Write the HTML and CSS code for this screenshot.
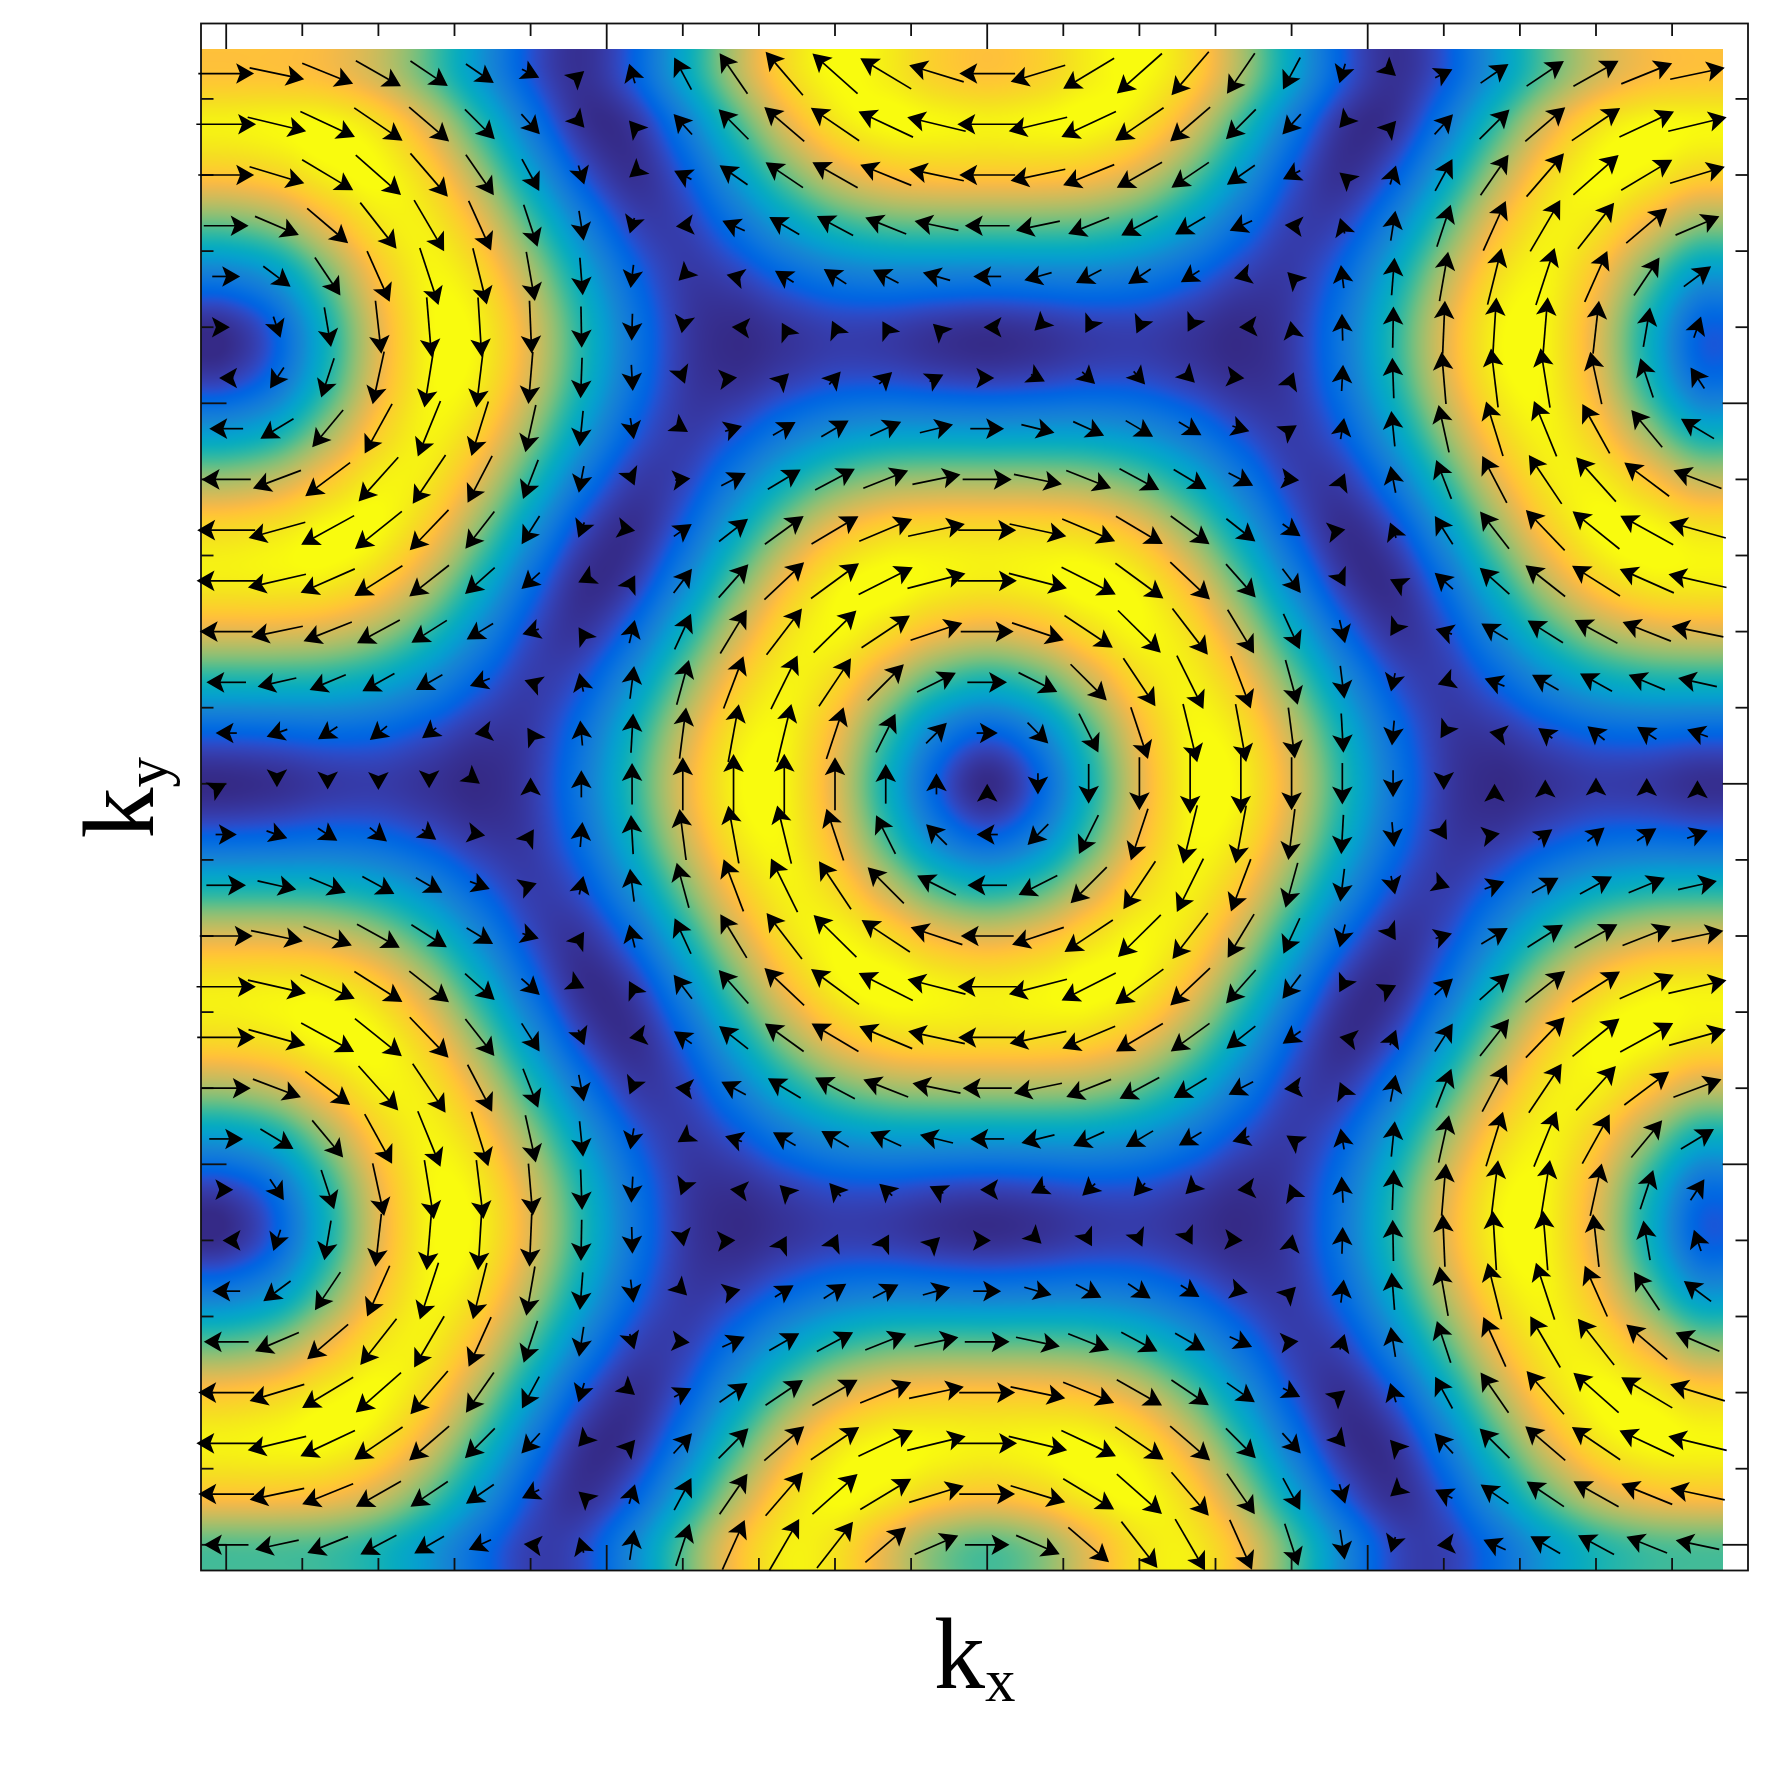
FILE: index.html
```html
<!DOCTYPE html>
<html lang="en">
<head>
<meta charset="utf-8">
<title>Spin texture in the kx-ky plane</title>
<link rel="stylesheet" href="styles.css">
</head>
<body>
<main class="figure">
  <div class="ylabel"><span class="label">k<sub class="sub">y</sub></span></div>
  <canvas id="plot" class="plot" width="1560" height="1560"></canvas>
  <div class="xlabel"><span class="label">k<sub class="sub">x</sub></span></div>
</main>
<script src="app.js"></script>
</body>
</html>
```
FILE: styles.css
```css
html, body {
  margin: 0;
  padding: 0;
  background: #fff;
}
.figure {
  display: grid;
  grid-template-columns: 195px 1560px;
  grid-template-rows: 18px 1560px 193px;
  width: 1771px;
  height: 1771px;
  font-family: "Liberation Serif", "Times New Roman", serif;
  color: #000;
}
.plot {
  display: block;
  grid-column: 2;
  grid-row: 2;
}
.ylabel {
  grid-column: 1;
  grid-row: 2;
  display: flex;
  justify-content: flex-start;
  padding-left: 68px;
  padding-top: 0;
}
.ylabel .label {
  writing-mode: vertical-rl;
  transform: rotate(180deg);
  align-self: flex-start;
  margin-top: 739px;
}
.ylabel .sub {
  vertical-align: -28px;
}
.xlabel {
  grid-column: 2;
  grid-row: 3;
  padding-left: 739px;
  padding-top: 25px;
}
.label {
  display: inline-block;
  font-size: 102px;
  line-height: 102px;
  white-space: nowrap;
}
.sub {
  font-size: 61px;
  line-height: 0;
  vertical-align: -13px;
}
```
FILE: app.js
```js
(function () {
  var OX = 195, OY = 18;
  var ctx = document.getElementById('plot').getContext('2d');

  var HEAT = { l: 201, t: 49, size: 1522 };
  var AX = { l: 201, t: 23.5, r: 1748, b: 1570.5 };
  var MAJOR = 380.5, MINOR = 76.1;
  var X0 = 226.2, Y0 = 1544.8;     // page position of k = -2pi
  var N = 30, STEP = 4 * Math.PI / N, PX = MAJOR * 4 / N;
  var S3 = Math.sqrt(3), MAXV = 3.05;

  var PARULA = [
    [.2081,.1663,.5292],[.2116,.1898,.5777],[.2123,.2138,.6270],[.2081,.2386,.6771],
    [.1959,.2645,.7279],[.1707,.2919,.7792],[.1253,.3242,.8303],[.0591,.3598,.8683],
    [.0117,.3875,.8820],[.0060,.4086,.8828],[.0165,.4266,.8786],[.0329,.4430,.8720],
    [.0498,.4586,.8641],[.0629,.4737,.8554],[.0723,.4887,.8467],[.0779,.5040,.8384],
    [.0793,.5200,.8312],[.0749,.5375,.8263],[.0641,.5570,.8240],[.0488,.5772,.8228],
    [.0343,.5966,.8199],[.0265,.6137,.8135],[.0239,.6287,.8038],[.0231,.6418,.7913],
    [.0228,.6535,.7768],[.0267,.6642,.7607],[.0384,.6743,.7436],[.0590,.6838,.7254],
    [.0843,.6928,.7062],[.1133,.7015,.6859],[.1453,.7098,.6646],[.1801,.7177,.6424],
    [.2178,.7250,.6193],[.2586,.7317,.5954],[.3022,.7376,.5712],[.3482,.7424,.5473],
    [.3953,.7459,.5244],[.4420,.7481,.5033],[.4871,.7491,.4840],[.5300,.7491,.4661],
    [.5709,.7485,.4494],[.6099,.7473,.4337],[.6473,.7456,.4188],[.6834,.7435,.4044],
    [.7184,.7411,.3905],[.7525,.7384,.3768],[.7858,.7356,.3633],[.8185,.7327,.3498],
    [.8507,.7299,.3360],[.8824,.7274,.3217],[.9139,.7258,.3063],[.9450,.7261,.2886],
    [.9739,.7314,.2666],[.9938,.7455,.2403],[.9990,.7653,.2164],[.9955,.7861,.1967],
    [.9880,.8066,.1794],[.9789,.8271,.1633],[.9697,.8481,.1475],[.9626,.8705,.1309],
    [.9589,.8949,.1132],[.9598,.9218,.0948],[.9661,.9514,.0755],[.9763,.9831,.0538]
  ];

  // directions (degrees, clockwise from +x) of the arrows that sit exactly on a null of the field
  var NULL_DIRS = { 0: -26, 5: 37, 15: -90, 25: -90 };

  // in-plane field on a triangular lattice: the curl of the band energy
  function field(kx, ky) {
    var dx = -Math.sin(kx) - Math.sin(kx / 2) * Math.cos(S3 * ky / 2);
    var dy = -S3 * Math.cos(kx / 2) * Math.sin(S3 * ky / 2);
    return { u: -dy, v: dx };
  }

  // grid samples: row 0 is the top row of the picture
  var mag = [], vec = [];
  for (var r = 0; r < N; r++) {
    mag.push([]); vec.push([]);
    for (var c = 0; c < N; c++) {
      var kx = -2 * Math.PI + c * STEP;
      var ky = -2 * Math.PI + (N - 1 - r) * STEP;
      var f = field(kx, ky);
      vec[r].push(f);
      mag[r].push(f.u * f.u + f.v * f.v);
    }
  }

  function cubic(p0, p1, p2, p3, t) {
    return p1 + 0.5 * t * (p2 - p0 + t * (2 * p0 - 5 * p1 + 4 * p2 - p3 + t * (3 * (p1 - p2) + p3 - p0)));
  }
  function at(r, c) {
    r = Math.max(0, Math.min(N - 1, r));
    c = Math.max(0, Math.min(N - 1, c));
    return mag[r][c];
  }
  function sample(gx, gy) {
    var c = Math.floor(gx), r = Math.floor(gy), tx = gx - c, ty = gy - r, row = [];
    for (var j = -1; j <= 2; j++) {
      row.push(cubic(at(r + j, c - 1), at(r + j, c), at(r + j, c + 1), at(r + j, c + 2), tx));
    }
    return cubic(row[0], row[1], row[2], row[3], ty);
  }

  // heat map
  var img = ctx.createImageData(HEAT.size, HEAT.size), d = img.data, i = 0;
  var cellPx = HEAT.size / N;
  for (var y = 0; y < HEAT.size; y++) {
    for (var x = 0; x < HEAT.size; x++) {
      var gx = (x + 0.5) / cellPx - 0.5, gy = (y + 0.5) / cellPx - 0.5;
      var v = Math.max(0, Math.min(0.99999, sample(gx, gy) / MAXV)) * 63;
      var a = Math.floor(v), t = v - a, p = PARULA[a], q = PARULA[a + 1];
      d[i++] = 255 * (p[0] + (q[0] - p[0]) * t);
      d[i++] = 255 * (p[1] + (q[1] - p[1]) * t);
      d[i++] = 255 * (p[2] + (q[2] - p[2]) * t);
      d[i++] = 255;
    }
  }
  ctx.putImageData(img, HEAT.l - OX, HEAT.t - OY);

  ctx.translate(-OX, -OY);

  // frame and ticks
  ctx.strokeStyle = '#111';
  ctx.lineWidth = 1.8;
  ctx.lineJoin = 'miter';
  ctx.strokeRect(AX.l, AX.t, AX.r - AX.l, AX.b - AX.t);
  function line(x1, y1, x2, y2) {
    ctx.beginPath(); ctx.moveTo(x1, y1); ctx.lineTo(x2, y2); ctx.stroke();
  }
  for (var n = 0; n <= 20; n++) {
    var len = n % 5 === 0 ? 25.5 : 12.5;
    var px = X0 + n * MINOR, py = Y0 - n * MINOR;
    if (n < 20) {
      line(px, AX.t, px, AX.t + len);
      line(px, AX.b, px, AX.b - len);
    }
    if (py > AX.t + 2) {
      line(AX.l, py, AX.l + len, py);
      line(AX.r, py, AX.r - len, py);
    }
  }

  // quiver: arrows pivot on their middle, the head has a fixed size
  var SCALE = 34.5;
  function arrow(cx, cy, u, v, nullDir) {
    var m = Math.sqrt(u * u + v * v), ang;
    if (m < 1e-9) { ang = (nullDir === undefined ? -90 : nullDir) * Math.PI / 180; m = 0; }
    else { ang = Math.atan2(-v, u); }
    var L = m * SCALE;
    ctx.save();
    ctx.translate(cx, cy);
    ctx.rotate(ang);
    ctx.strokeStyle = '#000';
    ctx.lineWidth = 1.7;
    if (L > 14) {
      ctx.beginPath(); ctx.moveTo(-L / 2, 0); ctx.lineTo(L / 2 - 13, 0); ctx.stroke();
    }
    ctx.translate(L / 2, 0);
    ctx.fillStyle = '#000';
    ctx.beginPath();
    ctx.moveTo(0, 0);
    ctx.lineTo(-18, 10.3);
    ctx.lineTo(-14, 0);
    ctx.lineTo(-18, -10.3);
    ctx.closePath();
    ctx.fill();
    ctx.restore();
  }
  for (var rr = 0; rr < N; rr++) {
    for (var cc = 0; cc < N; cc++) {
      var fv = vec[rr][cc];
      arrow(X0 + cc * PX, Y0 - (N - 1 - rr) * PX, fv.u, fv.v, NULL_DIRS[cc]);
    }
  }
})();
```
